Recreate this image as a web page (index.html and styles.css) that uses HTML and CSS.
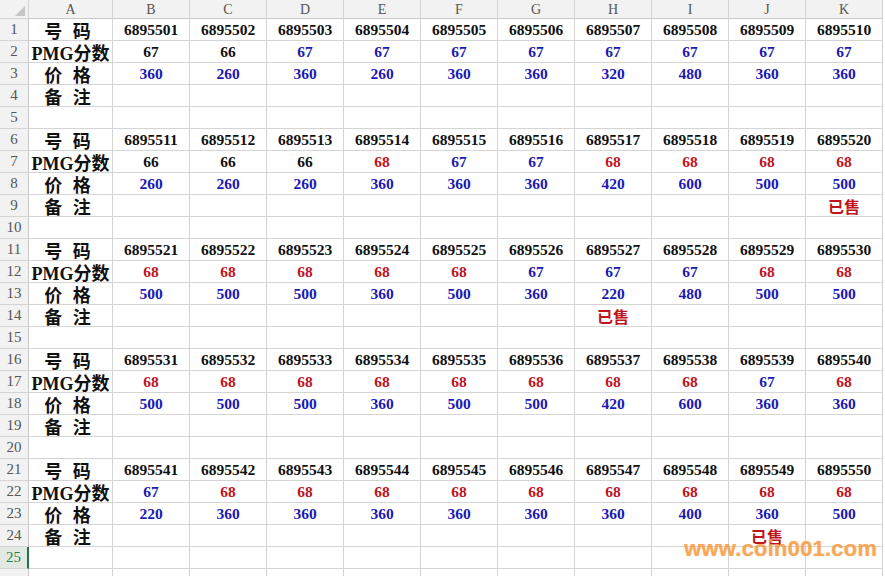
FILE: index.html
```html
<!DOCTYPE html>
<html lang="zh">
<head>
<meta charset="utf-8">
<title>号码表</title>
<link rel="stylesheet" href="styles.css">
</head>
<body>
<div class="sheet">
  <div class="grid">
    <div class="corner"><span class="tri"></span></div>
    <div class="ch">A</div><div class="ch">B</div><div class="ch">C</div><div class="ch">D</div><div class="ch">E</div><div class="ch">F</div><div class="ch">G</div><div class="ch">H</div><div class="ch">I</div><div class="ch">J</div><div class="ch">K</div>

    <div class="rh">1</div><div class="c lab sp">号 码</div>
    <div class="c n">6895501</div><div class="c n">6895502</div><div class="c n">6895503</div><div class="c n">6895504</div><div class="c n">6895505</div><div class="c n">6895506</div><div class="c n">6895507</div><div class="c n">6895508</div><div class="c n">6895509</div><div class="c n">6895510</div>
    <div class="rh">2</div><div class="c lab">PMG分数</div>
    <div class="c n">67</div><div class="c n">66</div><div class="c n b">67</div><div class="c n b">67</div><div class="c n b">67</div><div class="c n b">67</div><div class="c n b">67</div><div class="c n b">67</div><div class="c n b">67</div><div class="c n b">67</div>
    <div class="rh">3</div><div class="c lab sp">价 格</div>
    <div class="c n b">360</div><div class="c n b">260</div><div class="c n b">360</div><div class="c n b">260</div><div class="c n b">360</div><div class="c n b">360</div><div class="c n b">320</div><div class="c n b">480</div><div class="c n b">360</div><div class="c n b">360</div>
    <div class="rh">4</div><div class="c lab sp">备 注</div>
    <div class="c"></div><div class="c"></div><div class="c"></div><div class="c"></div><div class="c"></div><div class="c"></div><div class="c"></div><div class="c"></div><div class="c"></div><div class="c"></div>
    <div class="rh">5</div><div class="c"></div>
    <div class="c"></div><div class="c"></div><div class="c"></div><div class="c"></div><div class="c"></div><div class="c"></div><div class="c"></div><div class="c"></div><div class="c"></div><div class="c"></div>

    <div class="rh">6</div><div class="c lab sp">号 码</div>
    <div class="c n">6895511</div><div class="c n">6895512</div><div class="c n">6895513</div><div class="c n">6895514</div><div class="c n">6895515</div><div class="c n">6895516</div><div class="c n">6895517</div><div class="c n">6895518</div><div class="c n">6895519</div><div class="c n">6895520</div>
    <div class="rh">7</div><div class="c lab">PMG分数</div>
    <div class="c n">66</div><div class="c n">66</div><div class="c n">66</div><div class="c n r">68</div><div class="c n b">67</div><div class="c n b">67</div><div class="c n r">68</div><div class="c n r">68</div><div class="c n r">68</div><div class="c n r">68</div>
    <div class="rh">8</div><div class="c lab sp">价 格</div>
    <div class="c n b">260</div><div class="c n b">260</div><div class="c n b">260</div><div class="c n b">360</div><div class="c n b">360</div><div class="c n b">360</div><div class="c n b">420</div><div class="c n b">600</div><div class="c n b">500</div><div class="c n b">500</div>
    <div class="rh">9</div><div class="c lab sp">备 注</div>
    <div class="c"></div><div class="c"></div><div class="c"></div><div class="c"></div><div class="c"></div><div class="c"></div><div class="c"></div><div class="c"></div><div class="c"></div><div class="c sold">已售</div>
    <div class="rh">10</div><div class="c"></div>
    <div class="c"></div><div class="c"></div><div class="c"></div><div class="c"></div><div class="c"></div><div class="c"></div><div class="c"></div><div class="c"></div><div class="c"></div><div class="c"></div>

    <div class="rh">11</div><div class="c lab sp">号 码</div>
    <div class="c n">6895521</div><div class="c n">6895522</div><div class="c n">6895523</div><div class="c n">6895524</div><div class="c n">6895525</div><div class="c n">6895526</div><div class="c n">6895527</div><div class="c n">6895528</div><div class="c n">6895529</div><div class="c n">6895530</div>
    <div class="rh">12</div><div class="c lab">PMG分数</div>
    <div class="c n r">68</div><div class="c n r">68</div><div class="c n r">68</div><div class="c n r">68</div><div class="c n r">68</div><div class="c n b">67</div><div class="c n b">67</div><div class="c n b">67</div><div class="c n r">68</div><div class="c n r">68</div>
    <div class="rh">13</div><div class="c lab sp">价 格</div>
    <div class="c n b">500</div><div class="c n b">500</div><div class="c n b">500</div><div class="c n b">360</div><div class="c n b">500</div><div class="c n b">360</div><div class="c n b">220</div><div class="c n b">480</div><div class="c n b">500</div><div class="c n b">500</div>
    <div class="rh">14</div><div class="c lab sp">备 注</div>
    <div class="c"></div><div class="c"></div><div class="c"></div><div class="c"></div><div class="c"></div><div class="c"></div><div class="c sold">已售</div><div class="c"></div><div class="c"></div><div class="c"></div>
    <div class="rh">15</div><div class="c"></div>
    <div class="c"></div><div class="c"></div><div class="c"></div><div class="c"></div><div class="c"></div><div class="c"></div><div class="c"></div><div class="c"></div><div class="c"></div><div class="c"></div>

    <div class="rh">16</div><div class="c lab sp">号 码</div>
    <div class="c n">6895531</div><div class="c n">6895532</div><div class="c n">6895533</div><div class="c n">6895534</div><div class="c n">6895535</div><div class="c n">6895536</div><div class="c n">6895537</div><div class="c n">6895538</div><div class="c n">6895539</div><div class="c n">6895540</div>
    <div class="rh">17</div><div class="c lab">PMG分数</div>
    <div class="c n r">68</div><div class="c n r">68</div><div class="c n r">68</div><div class="c n r">68</div><div class="c n r">68</div><div class="c n r">68</div><div class="c n r">68</div><div class="c n r">68</div><div class="c n b">67</div><div class="c n r">68</div>
    <div class="rh">18</div><div class="c lab sp">价 格</div>
    <div class="c n b">500</div><div class="c n b">500</div><div class="c n b">500</div><div class="c n b">360</div><div class="c n b">500</div><div class="c n b">500</div><div class="c n b">420</div><div class="c n b">600</div><div class="c n b">360</div><div class="c n b">360</div>
    <div class="rh">19</div><div class="c lab sp">备 注</div>
    <div class="c"></div><div class="c"></div><div class="c"></div><div class="c"></div><div class="c"></div><div class="c"></div><div class="c"></div><div class="c"></div><div class="c"></div><div class="c"></div>
    <div class="rh">20</div><div class="c"></div>
    <div class="c"></div><div class="c"></div><div class="c"></div><div class="c"></div><div class="c"></div><div class="c"></div><div class="c"></div><div class="c"></div><div class="c"></div><div class="c"></div>

    <div class="rh">21</div><div class="c lab sp">号 码</div>
    <div class="c n">6895541</div><div class="c n">6895542</div><div class="c n">6895543</div><div class="c n">6895544</div><div class="c n">6895545</div><div class="c n">6895546</div><div class="c n">6895547</div><div class="c n">6895548</div><div class="c n">6895549</div><div class="c n">6895550</div>
    <div class="rh">22</div><div class="c lab">PMG分数</div>
    <div class="c n b">67</div><div class="c n r">68</div><div class="c n r">68</div><div class="c n r">68</div><div class="c n r">68</div><div class="c n r">68</div><div class="c n r">68</div><div class="c n r">68</div><div class="c n r">68</div><div class="c n r">68</div>
    <div class="rh">23</div><div class="c lab sp">价 格</div>
    <div class="c n b">220</div><div class="c n b">360</div><div class="c n b">360</div><div class="c n b">360</div><div class="c n b">360</div><div class="c n b">360</div><div class="c n b">360</div><div class="c n b">400</div><div class="c n b">360</div><div class="c n b">500</div>
    <div class="rh">24</div><div class="c lab sp">备 注</div>
    <div class="c"></div><div class="c"></div><div class="c"></div><div class="c"></div><div class="c"></div><div class="c"></div><div class="c"></div><div class="c"></div><div class="c sold">已售</div><div class="c"></div>
    <div class="rh sel">25</div><div class="c"></div>
    <div class="c"></div><div class="c"></div><div class="c"></div><div class="c"></div><div class="c"></div><div class="c"></div><div class="c"></div><div class="c"></div><div class="c"></div><div class="c"></div>
    <div class="rh"></div><div class="c"></div>
    <div class="c"></div><div class="c"></div><div class="c"></div><div class="c"></div><div class="c"></div><div class="c"></div><div class="c"></div><div class="c"></div><div class="c"></div><div class="c"></div>
  </div>
  <div class="watermark">www.coin001.com</div>
</div>
</body>
</html>
```

FILE: styles.css
```css
html, body {
  margin: 0;
  padding: 0;
  background: #ffffff;
}
body {
  width: 885px;
  height: 576px;
  overflow: hidden;
}
.sheet {
  position: relative;
  width: 885px;
  height: 576px;
  overflow: hidden;
}
.grid {
  display: grid;
  grid-template-columns: 29px 84px repeat(10, 77px);
  grid-template-rows: 19px;
  grid-auto-rows: 22px;
}
.grid > div {
  box-sizing: border-box;
  border-right: 1px solid #d4d4d4;
  border-bottom: 1px solid #d4d4d4;
  display: flex;
  align-items: center;
  justify-content: center;
  white-space: nowrap;
  overflow: hidden;
}
.corner {
  background: #f2f2f2;
  align-items: flex-end !important;
  justify-content: flex-end !important;
  padding: 0 3px 2px 0;
}
.tri {
  width: 0;
  height: 0;
  border-left: 10px solid transparent;
  border-bottom: 10px solid #c6c6c6;
}
.ch, .rh {
  background: #f2f2f2;
  color: #555555;
  font-family: "Liberation Serif", "DejaVu Serif", serif;
  font-size: 14px;
}
.ch {
  border-bottom-color: #c8c8c8 !important;
  padding-top: 1px;
}
.rh {
  border-right-color: #c8c8c8 !important;
  font-size: 15px;
}
.rh.sel {
  background: #e2e9e2;
  color: #2e7d4a;
  border-right: 2px solid #217346 !important;
}
.c {
  color: #111111;
}
.lab {
  font-family: "Liberation Serif", "Noto Sans CJK SC", serif;
  font-weight: bold;
  font-size: 18px;
}
.lab.sp {
  word-spacing: 6px;
  padding-right: 6px;
}
.n {
  font-family: "Liberation Serif", serif;
  font-weight: bold;
  font-size: 15.5px;
  padding-top: 1px;
}
.n.b {
  color: #1a1ab4;
}
.n.r {
  color: #be151e;
}
.sold {
  font-family: "Noto Sans CJK SC", sans-serif;
  font-weight: bold;
  font-size: 16px;
  color: #be151e;
}
.watermark {
  position: absolute;
  left: 684px;
  top: 537px;
  font-family: "Liberation Sans", Arial, sans-serif;
  font-weight: bold;
  font-size: 22px;
  line-height: 24px;
  color: rgba(247, 158, 70, 0.62);
  text-shadow: 0 0 1px rgba(247, 158, 70, 0.5), 0.5px 0 0 rgba(247, 158, 70, 0.5);
  letter-spacing: 0.2px;
}
```
